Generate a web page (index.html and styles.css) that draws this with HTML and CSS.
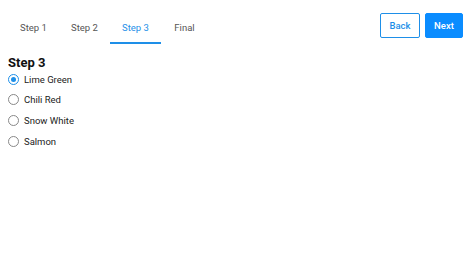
FILE: index.html
```html
<!DOCTYPE html>
<html>
<head>
<meta charset="utf-8">
<link rel="stylesheet" href="styles.css">
</head>
<body>
<div class="top">
  <div class="tabs">
    <div class="tab">Step 1</div>
    <div class="tab">Step 2</div>
    <div class="tab active">Step 3</div>
    <div class="tab last">Final</div>
  </div>
  <div class="actions">
    <button class="btn outline">Back</button>
    <button class="btn filled">Next</button>
  </div>
</div>
<h2 class="title">Step 3</h2>
<div class="options">
  <label class="opt"><span class="radio checked"></span>Lime Green</label>
  <label class="opt"><span class="radio"></span>Chili Red</label>
  <label class="opt"><span class="radio"></span>Snow White</label>
  <label class="opt"><span class="radio"></span>Salmon</label>
</div>
</body>
</html>
```
FILE: styles.css
```css
* { box-sizing: border-box; }
body {
  margin: 8px;
  font-family: Roboto, "Liberation Sans", sans-serif;
  background: #fff;
  color: #222;
}
.top {
  display: flex;
  justify-content: space-between;
  align-items: flex-start;
  padding-top: 5px;
  padding-right: 3px;
}
.tabs {
  display: flex;
}
.tab {
  width: 51px;
  height: 31px;
  display: flex;
  align-items: center;
  justify-content: center;
  font-size: 9.5px;
  color: #555;
  border-bottom: 2px solid transparent;
}
.tab.last {
  width: 47px;
}
.tab.active {
  color: #1e8fe8;
  border-bottom-color: #1e8fe8;
}
.actions {
  display: flex;
  gap: 5px;
}
.btn {
  height: 25px;
  font-family: Roboto, "Liberation Sans", sans-serif;
  font-size: 9.5px;
  font-weight: 500;
  border-radius: 2px;
  padding: 0;
}
.btn.outline {
  width: 40px;
  background: #fff;
  color: #1e8fe8;
  border: 1px solid #1e8fe8;
}
.btn.filled {
  width: 38px;
  background: #0a8cff;
  color: #fff;
  border: 1px solid #0a8cff;
}
.title {
  margin: 12px 0 -1px;
  line-height: 14px;
  font-size: 13px;
  font-weight: 700;
  color: #111;
}
.options {
  display: flex;
  flex-direction: column;
}
.opt {
  display: flex;
  align-items: center;
  height: 20.6px;
  font-size: 9.5px;
  color: #222;
}
.radio {
  width: 11px;
  height: 11px;
  border: 1.5px solid #888;
  border-radius: 50%;
  margin-right: 5px;
  display: flex;
  align-items: center;
  justify-content: center;
}
.radio.checked {
  border-color: #1e8fe8;
}
.radio.checked::after {
  content: "";
  width: 5px;
  height: 5px;
  border-radius: 50%;
  background: #1e8fe8;
}
```
